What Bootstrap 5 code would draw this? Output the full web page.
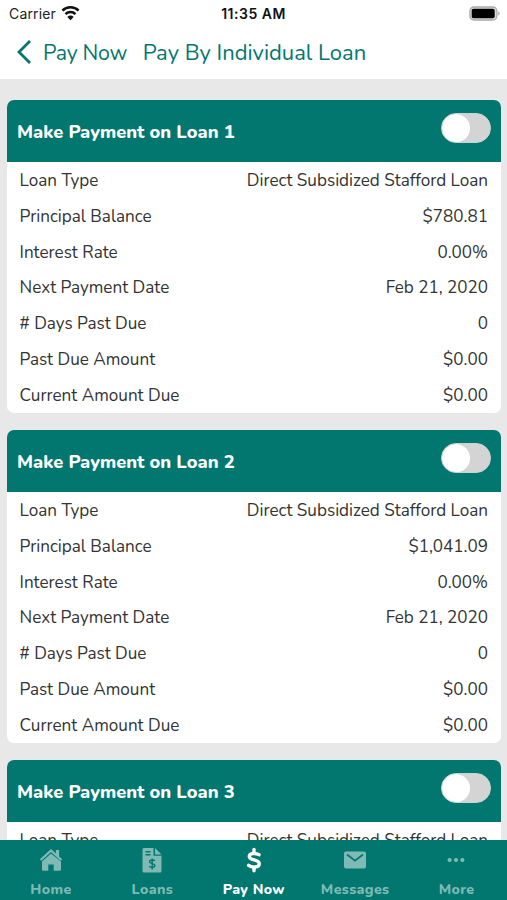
<!DOCTYPE html>
<html lang="en">
<head>
<meta charset="utf-8">
<meta name="viewport" content="width=device-width, initial-scale=1">
<title>Pay By Individual Loan</title>
<link href="https://cdn.jsdelivr.net/npm/bootstrap@5.3.0/dist/css/bootstrap.min.css" rel="stylesheet">
<style>
:root { --teal: #02776f; }
body { font-family: Nunito, Lato, sans-serif; background: #e8e8e8; color: #333; }
.status { height: 28px; font: 15px/28px Inter, sans-serif; color: #222; padding: 0 6px 0 9px; }
.status .side { flex: 1 1 0; }
.carrier { font-size: 14px; letter-spacing: .15px; }
.clock { font-size: 14px; font-weight: 600; color: #111; letter-spacing: .5px; margin-right: 3px; }
.titlebar { height: 51px; padding: 1px 0 0 16px; color: var(--teal); font-size: 22px; line-height: 48px; }
.titlebar a { color: inherit; }
.titlebar svg { margin-top: 11px; }
.back-label { margin-left: 11px; font-size: 21.3px; letter-spacing: -.25px; line-height: 48px; }
.page-title { margin-left: 15.5px; }
.loans { padding: 21px 6px 0 7px; gap: 17.5px; }
.loan { border-radius: 7px; }
.loan-head { height: 62px; background: var(--teal); color: #fff; padding: 0 10px; }
.loan-title { font-size: 18.3px; font-weight: 800; line-height: 64px; }
.loan-head .form-switch { padding: 0; min-height: 0; margin-top: 12.5px; }
.loan-head .form-check-input { width: 50px; height: 30.5px; margin: 0; border: 1px solid #c5d5d2; background-color: #d4d4d4; background-size: auto; background-image: radial-gradient(circle at 14px 14.2px, #fff 13.6px, #d4d4d4 14.4px); background-repeat: no-repeat; background-position: 0 0; }
.detail { height: 35.8px; line-height: 38px; font-size: 17.1px; padding: 0 13px 0 12.5px; }
.tabs { height: 60px; background: var(--teal); color: #7fbab5; font-size: 14.2px; font-weight: 800; letter-spacing: .38px; }
.tabs a { color: inherit; padding-top: 6px; }
.tabs a.active { color: #fff; }
.tabs svg { height: 28px; width: 28px; }
.tabs span { line-height: 18px; margin: 7px 0 0 .5px; }
</style>
<script src="https://cdn.jsdelivr.net/npm/bootstrap@5.3.0/dist/js/bootstrap.bundle.min.js"></script>
</head>
<body class="vh-100 d-flex flex-column overflow-hidden">
<header class="bg-white flex-shrink-0">
  <div class="status d-flex align-items-center">
    <div class="side d-flex align-items-center">
      <span class="carrier">Carrier</span>
      <svg class="ms-1" width="22" height="18" viewBox="0 0 22 18" fill="none" stroke="#111" stroke-width="2.500"><path d="M2.400 5.700a11.400 11.400 0 0 1 16.200 0M5.500 9.200a7 7 0 0 1 10 0"/><path d="M7.300 11.900a4.600 4.600 0 0 1 6.400 0L10.500 15.200z" fill="#111" stroke="none"/></svg>
    </div>
    <span class="clock">11:35 AM</span>
    <div class="side d-flex justify-content-end">
      <svg width="32" height="16" viewBox="0 0 32 16"><rect x=".9" y="1" width="27" height="13" rx="4" fill="#ddd" stroke="#aaa" stroke-width="1.300"/><rect x="2.700" y="2.700" width="23" height="9.600" rx="1.800" fill="#000"/><path d="M29.300 5.300q3 2.200 0 4.400z" fill="#aaa"/></svg>
    </div>
  </div>
  <div class="titlebar d-flex">
    <a href="#" class="d-flex text-decoration-none"><svg width="16" height="24" viewBox="0 0 16 24" fill="none" stroke="currentColor" stroke-width="2.800"><path d="M14 1 3 12l11 11"/></svg><span class="back-label">Pay Now</span></a>
    <span class="page-title">Pay By Individual Loan</span>
  </div>
</header>
<main class="loans d-flex flex-column flex-grow-1 overflow-hidden" id="loans"></main>
<nav class="tabs d-flex flex-shrink-0 text-center">
  <a href="#" class="col d-flex flex-column align-items-center text-decoration-none"><svg viewBox="0 0 28 28"><path d="M14 3 2.800 13.200l1.500 1.500L14 6l9.700 8.700 1.500-1.500-3.100-2.800V3.900h-3.200v3.600z" fill="currentColor"/><path d="M14 7.400 5 15.500V23.500q0 1.300 1.300 1.300H11.300v-6.400h5.400V24.800H22.700q1.300 0 1.300-1.300v-8z" fill="currentColor"/></svg><span>Home</span></a>
  <a href="#" class="col d-flex flex-column align-items-center text-decoration-none"><svg viewBox="0 0 28 28"><path d="M6 2h9.500v7.700h8V25q0 1.500-1.500 1.500H6Q4.500 26.500 4.500 25V3.500Q4.500 2 6 2z" fill="currentColor"/><path d="M17 2l6.500 6.500H17z" fill="currentColor"/><path d="M7.500 5.700h5M7.500 8.800h5" stroke="#02776f" stroke-width="1.400"/><path d="M17 14.800c-1-1-5.400-1.500-5.400 1s5.300 1.200 5.300 3.700-4 2.200-5.700.9M14.200 12.400v11" fill="none" stroke="#02776f" stroke-width="1.400"/></svg><span>Loans</span></a>
  <a href="#" class="active col d-flex flex-column align-items-center text-decoration-none"><svg viewBox="0 0 28 28" fill="none" stroke="currentColor" stroke-width="3.400" stroke-linecap="round"><path d="M19 8.700c-2.300-1.500-9.700-2.400-9.700 1.700 0 4.500 10 2.500 10 7.300 0 4.400-7.800 4-10.700 1.700"/><path d="M14 3.400v3M14 21.500v3.200"/></svg><span>Pay Now</span></a>
  <a href="#" class="col d-flex flex-column align-items-center text-decoration-none"><svg viewBox="0 0 28 28"><rect x="3" y="5.500" width="22" height="17" rx="2" fill="currentColor"/><path d="M6 8.500l8 6.200 8-6.200" fill="none" stroke="#02776f" stroke-width="1.700"/></svg><span>Messages</span></a>
  <a href="#" class="col d-flex flex-column align-items-center text-decoration-none"><svg viewBox="0 0 28 28" fill="currentColor"><circle cx="7.600" cy="14" r="2.100"/><circle cx="14" cy="14" r="2.100"/><circle cx="20.400" cy="14" r="2.100"/></svg><span>More</span></a>
</nav>
<script>
const balances = ['$780.81', '$1,041.09', '$1,041.09'];
document.getElementById('loans').innerHTML = balances.map((balance, i) => {
  const details = [['Loan Type', 'Direct Subsidized Stafford Loan'], ['Principal Balance', balance], ['Interest Rate', '0.00%'], ['Next Payment Date', 'Feb 21, 2020'], ['# Days Past Due', '0'], ['Past Due Amount', '$0.00'], ['Current Amount Due', '$0.00']];
  // Only the first line of the third loan fits above the tab bar.
  const rows = i === 2 ? details.slice(0, 1) : details;
  return `<section class="loan bg-white overflow-hidden flex-shrink-0">
    <div class="loan-head d-flex justify-content-between align-items-start">
      <span class="loan-title">Make Payment on Loan ${i + 1}</span>
      <div class="form-check form-switch"><input class="form-check-input float-none d-block" type="checkbox" role="switch" aria-label="Loan ${i + 1}"></div>
    </div>
    ${rows.map(([label, value]) => `<div class="detail d-flex justify-content-between"><span>${label}</span><span>${value}</span></div>`).join('')}
  </section>`;
}).join('');
</script>
</body>
</html>
